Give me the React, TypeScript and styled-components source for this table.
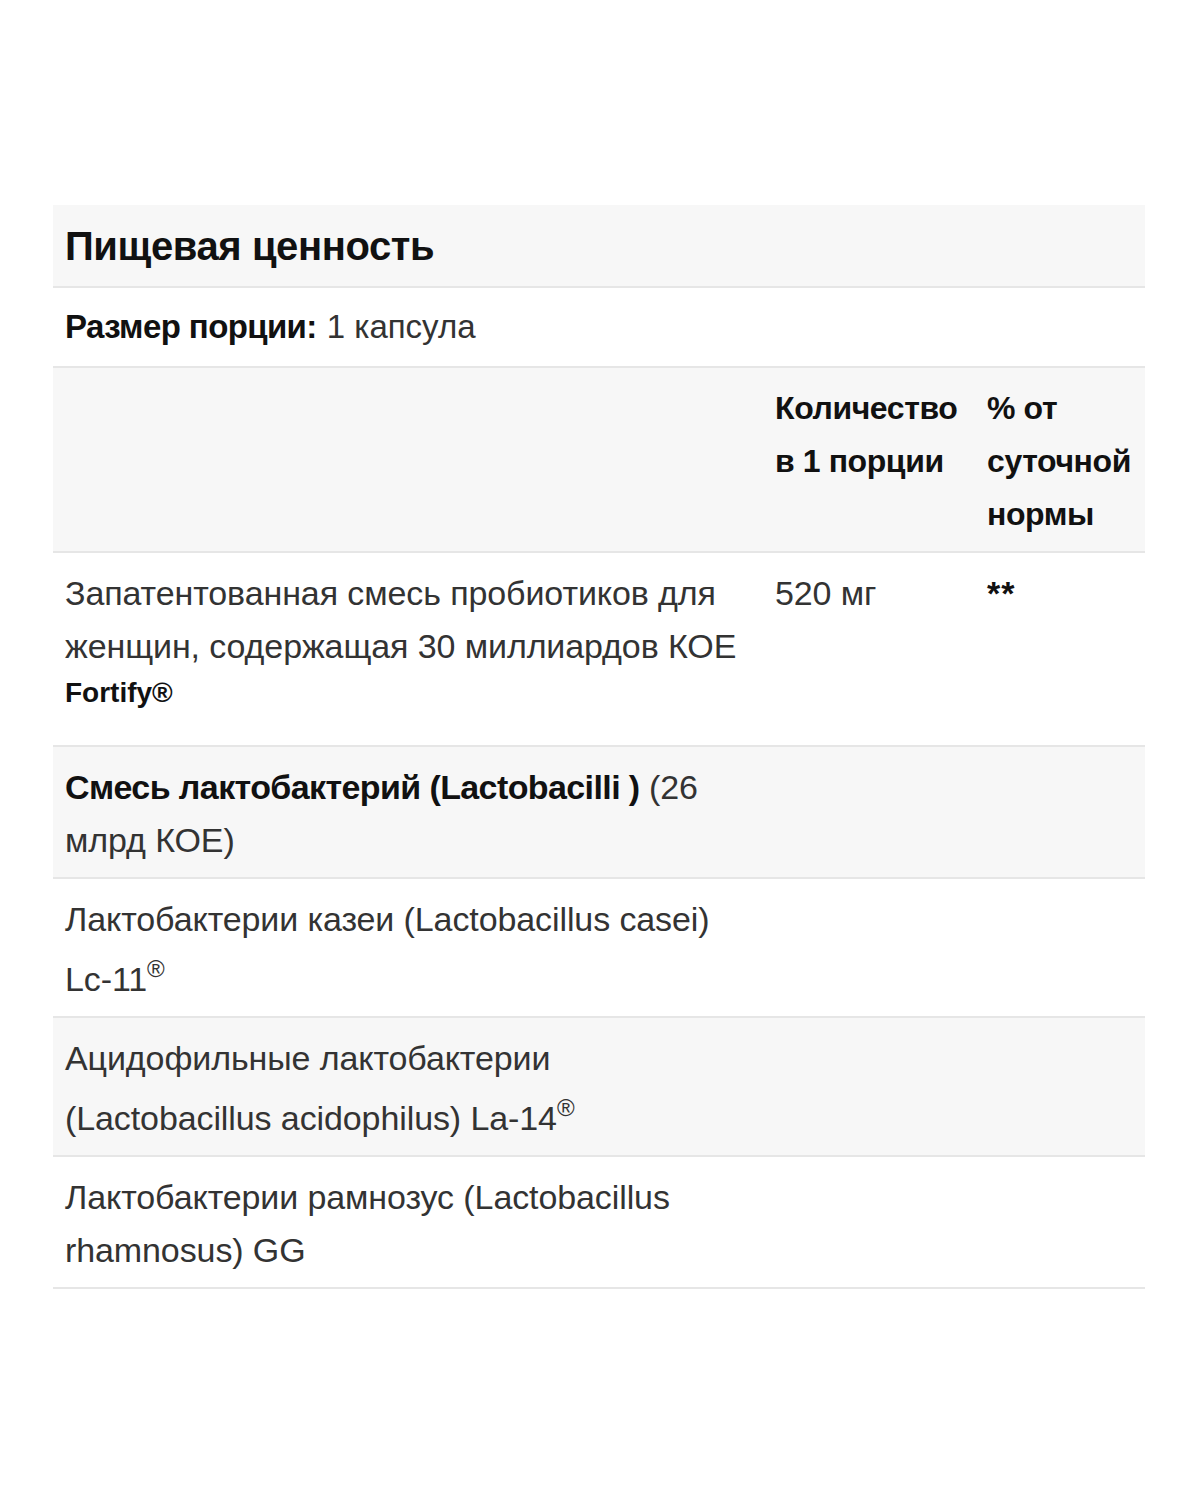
import React from "react";
import styled, { createGlobalStyle } from "styled-components";

const GlobalStyle = createGlobalStyle`
  html, body {
    margin: 0;
    padding: 0;
    background: #ffffff;
  }
  body {
    font-family: "Liberation Sans", Arial, sans-serif;
    color: #333333;
  }
`;

const Page = styled.div`
  width: 1200px;
  height: 1500px;
  padding: 205px 55px 0 53px;
  box-sizing: border-box;
`;

const Table = styled.div`
  display: flex;
  flex-direction: column;
  width: 1092px;
`;

const Row = styled.div<{ $shaded?: boolean }>`
  display: grid;
  grid-template-columns: 710px 212px 1fr;
  background: ${(p) => (p.$shaded ? "#f7f7f7" : "#ffffff")};
  border-bottom: 2px solid #e6e6e6;
`;

const TitleRow = styled.div`
  display: flex;
  align-items: center;
  height: 83px;
  box-sizing: border-box;
  padding: 0 12px;
  background: #f7f7f7;
  border-bottom: 2px solid #e6e6e6;
`;

const Title = styled.h2`
  margin: 0;
  font-size: 40px;
  line-height: 44px;
  font-weight: 700;
  color: #111111;
  letter-spacing: -0.4px;
`;

const ServingRow = styled.div`
  display: flex;
  align-items: center;
  gap: 10px;
  height: 80px;
  box-sizing: border-box;
  padding: 0 12px;
  font-size: 33px;
  color: #333333;
  border-bottom: 2px solid #e6e6e6;
`;

const Strong = styled.b`
  color: #111111;
  font-weight: 700;
  letter-spacing: -0.6px;
`;

const Cell = styled.div<{ $bold?: boolean }>`
  padding: 14px 12px 10px;
  font-size: 34px;
  line-height: 53px;
  letter-spacing: -0.1px;
  font-weight: ${(p) => (p.$bold ? 700 : 400)};
  color: ${(p) => (p.$bold ? "#111111" : "#333333")};
  ${(p) => (p.$bold ? "font-size: 32px; letter-spacing: -0.4px;" : "")}
`;

const Brand = styled.span`
  display: block;
  font-size: 28px;
  line-height: 40px;
  font-weight: 700;
  color: #111111;
  letter-spacing: 0;
  margin-bottom: 22px;
`;

const Reg = styled.sup`
  font-size: 24px;
  line-height: 46px;
  vertical-align: 14px;
`;

const Stars = styled.span`
  font-weight: 700;
  color: #111111;
  letter-spacing: 1px;
`;

export default function App() {
  return (
    <>
      <GlobalStyle />
      <Page>
        <Table>
          <TitleRow>
            <Title>Пищевая ценность</Title>
          </TitleRow>
          <ServingRow>
            <Strong>Размер порции:</Strong>
            <span>1 капсула</span>
          </ServingRow>
          <Row $shaded>
            <Cell />
            <Cell $bold>Количество в 1 порции</Cell>
            <Cell $bold>% от суточной нормы</Cell>
          </Row>
          <Row>
            <Cell>
              Запатентованная смесь пробиотиков для женщин, содержащая 30
              миллиардов КОЕ
              <Brand>Fortify®</Brand>
            </Cell>
            <Cell>520 мг</Cell>
            <Cell>
              <Stars>**</Stars>
            </Cell>
          </Row>
          <Row $shaded>
            <Cell>
              <Strong>Смесь лактобактерий (Lactobacilli )</Strong> (26 млрд
              КОЕ)
            </Cell>
            <Cell />
            <Cell />
          </Row>
          <Row>
            <Cell>
              Лактобактерии казеи (Lactobacillus casei) Lc-11<Reg>®</Reg>
            </Cell>
            <Cell />
            <Cell />
          </Row>
          <Row $shaded>
            <Cell>
              Ацидофильные лактобактерии (Lactobacillus acidophilus) La-14
              <Reg>®</Reg>
            </Cell>
            <Cell />
            <Cell />
          </Row>
          <Row>
            <Cell>Лактобактерии рамнозус (Lactobacillus rhamnosus) GG</Cell>
            <Cell />
            <Cell />
          </Row>
        </Table>
      </Page>
    </>
  );
}
